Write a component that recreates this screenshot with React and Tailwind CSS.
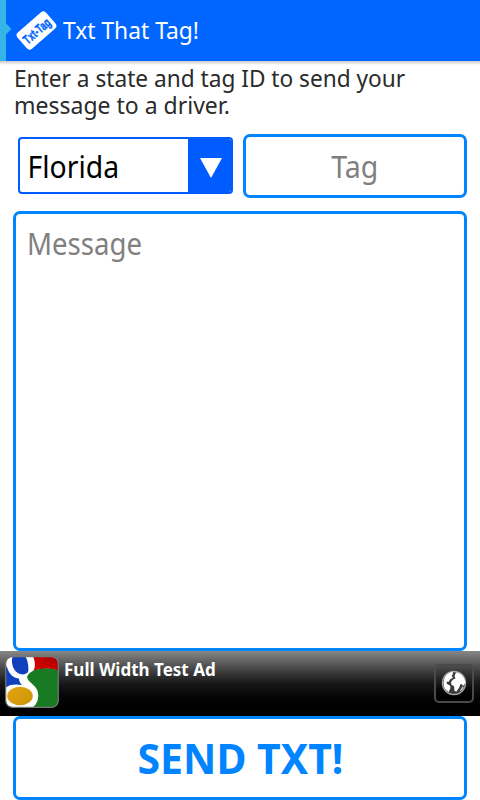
function TagLogo() {
  return (
    <svg className="block h-[42px] w-[42px] shrink-0 overflow-visible" viewBox="0 0 42 42">
      <g transform="translate(21.5 20.5) rotate(-41)">
        <rect x="-19" y="-10.8" width="38" height="21.6" rx="4" fill="#fff" />
        <g transform="scale(0.66 1)">
          <text
            x="0"
            y="5"
            textAnchor="middle"
            fontFamily="'Liberation Sans', Arial, sans-serif"
            fontWeight="700"
            fontSize="13"
            letterSpacing="0.3"
            fill="#0066ff"
            stroke="#0066ff"
            strokeWidth="0.5"
          >
            Txt-Tag
          </text>
        </g>
      </g>
    </svg>
  );
}

function GoogleIcon() {
  return (
    <svg className="block h-[52px] w-[54px] shrink-0" viewBox="0 0 54 52">
      <defs>
        <clipPath id="tile">
          <rect x="1" y="1" width="52" height="50" rx="6" />
        </clipPath>
        <linearGradient id="red" x1="0" x2="1" y1="1" y2="0">
          <stop offset="0" stopColor="#e00000" />
          <stop offset="1" stopColor="#a80000" />
        </linearGradient>
        <linearGradient id="gold" x1="0" x2="1" y1="0" y2="1">
          <stop offset="0" stopColor="#e0a810" />
          <stop offset="1" stopColor="#cf9208" />
        </linearGradient>
      </defs>
      <g clipPath="url(#tile)">
        <rect width="54" height="52" fill="#fff" />
        <path d="M28 0H54V15C45 12 37 12 28 15C31 11 30 5 28 0Z" fill="url(#red)" />
        <path d="M22 21C24 15 32 12.500 41 12.500C46 12.500 50 13 54 15V52H27C32 48 34 43 33 37C32 29 23 27 22 21Z" fill="#187a22" />
        <path d="M8 0H20C23 4 24 12 23 16C20 20 12 19 9 13C7 9 6 4 8 0Z" fill="#1040bc" />
        <path d="M0 9L2 11C4 18 8 22 14 22.500C14 25 15 27 17 29C11 28 5 28 0 32Z" fill="#1040bc" />
        <ellipse cx="15" cy="40" rx="12.800" ry="9.200" fill="url(#gold)" />
      </g>
      <rect x="0.7" y="0.7" width="52.6" height="50.6" rx="6.5" fill="none" stroke="#777" strokeWidth="1.2" />
    </svg>
  );
}

function GlobeIcon() {
  return (
    <svg className="block h-[26px] w-[26px]" viewBox="0 0 26 26">
      <circle cx="13" cy="13" r="11.500" fill="#3a3a3a" stroke="#aaa" strokeWidth="1.4" />
      <path d="M4 7C6 3.500 9 2 12 2L11.500 5L10.500 6L12 7.500L9 9.500L7.500 12L5.500 11.500L6 14L9 15.500L9.500 18L8.500 20L8 22C3 20 1 14 4 7Z" fill="#fff" />
      <path d="M15 2.500C20 3 24 7 24.300 13L22 16L20.500 14L19.500 14L18.500 17L15.500 21.500L13.500 21L13 16L10.500 15L10 12L12 9.500L14.500 8.500L13.500 6Z" fill="#fff" />
      <path d="M21 17L23 16.500L21 20L18.500 21.500Z" fill="#ccc" />
    </svg>
  );
}

export default function App() {
  return (
    <div className="flex h-[800px] w-[480px] flex-col overflow-hidden bg-white font-['Noto_Sans','Open_Sans',sans-serif]">
      <header className="flex h-[61px] shrink-0 bg-[#0066ff]">
        <div className="h-full w-1.5 bg-[#33b5e5]" />
        <svg className="block h-[61px] w-[9px]" viewBox="0 0 9 61">
          <path d="M0 23.5L5.5 29L0 34.5Z" fill="#33b5e5" />
        </svg>
        <div className="flex h-[61px] items-center">
          <TagLogo />
          <h1 className="ml-[6px] origin-left scale-x-[0.95] whitespace-nowrap pb-[2px] text-[24px] leading-[58px] text-white">Txt That Tag!</h1>
        </div>
      </header>
      <div className="h-[4px] shrink-0 bg-gradient-to-b from-[#c9c9c9] to-white" />

      <div className="h-[69px] shrink-0 whitespace-nowrap pl-[14px] text-[23px] leading-[27px] text-[#2b2b2b]">
        <p className="origin-left scale-x-[0.985]">Enter a state and tag ID to send your</p>
        <p>message to a driver.</p>
      </div>

      <div className="flex h-[77px] shrink-0 pl-[18px]">
        <div className="mt-[3px] flex h-[57px] w-[215px] overflow-hidden rounded-[4px] border-2 border-[#005cff]">
          <span className="flex-1 origin-left scale-x-[0.945] pl-[8px] text-[30px] leading-[55px] text-black">Florida</span>
          <span className="flex w-[43px] items-center justify-center bg-[#005cff]">
            <svg className="ml-[2px] mt-[4px] block h-5 w-[22px]" viewBox="0 0 22 20">
              <path d="M0 0H22L11 20Z" fill="#fff" />
            </svg>
          </span>
        </div>
        <div className="ml-[10px] h-[64px] w-[224px] rounded-[7px] border-3 border-[#0084ff] text-center text-[30px] leading-[60px] text-[#808080]">
          <span className="inline-block scale-x-[0.95]">Tag</span>
        </div>
      </div>

      <div className="mx-[13px] h-[440px] shrink-0 rounded-[7px] border-3 border-[#0084ff] pl-[11px] pt-[10px] text-[30px] leading-[40px] text-[#808080]">
        <span className="inline-block origin-left scale-x-[0.92]">Message</span>
      </div>

      <div className="flex h-[65px] shrink-0 bg-gradient-to-b from-[#888888] via-[#181818] via-50% to-black pl-[5px] pt-[5px]">
        <GoogleIcon />
        <span className="ml-[5px] mt-[3px] flex-1 text-[17px] font-bold leading-[22px] text-white">Full Width Test Ad</span>
        <div className="mr-[6px] mt-2 flex h-[39px] w-[40px] items-center justify-center rounded-[5px] border-2 border-[#4a4a4a] bg-gradient-to-b from-[#4c4c4c] to-black pb-[2px]">
          <GlobeIcon />
        </div>
      </div>

      <div className="mx-[13px] h-[84px] shrink-0 rounded-[7px] border-3 border-[#0084ff] text-center text-[42px] font-bold leading-[78px] text-[#0084ff]">
        <span className="inline-block scale-x-[0.976]">SEND TXT!</span>
      </div>
    </div>
  );
}
